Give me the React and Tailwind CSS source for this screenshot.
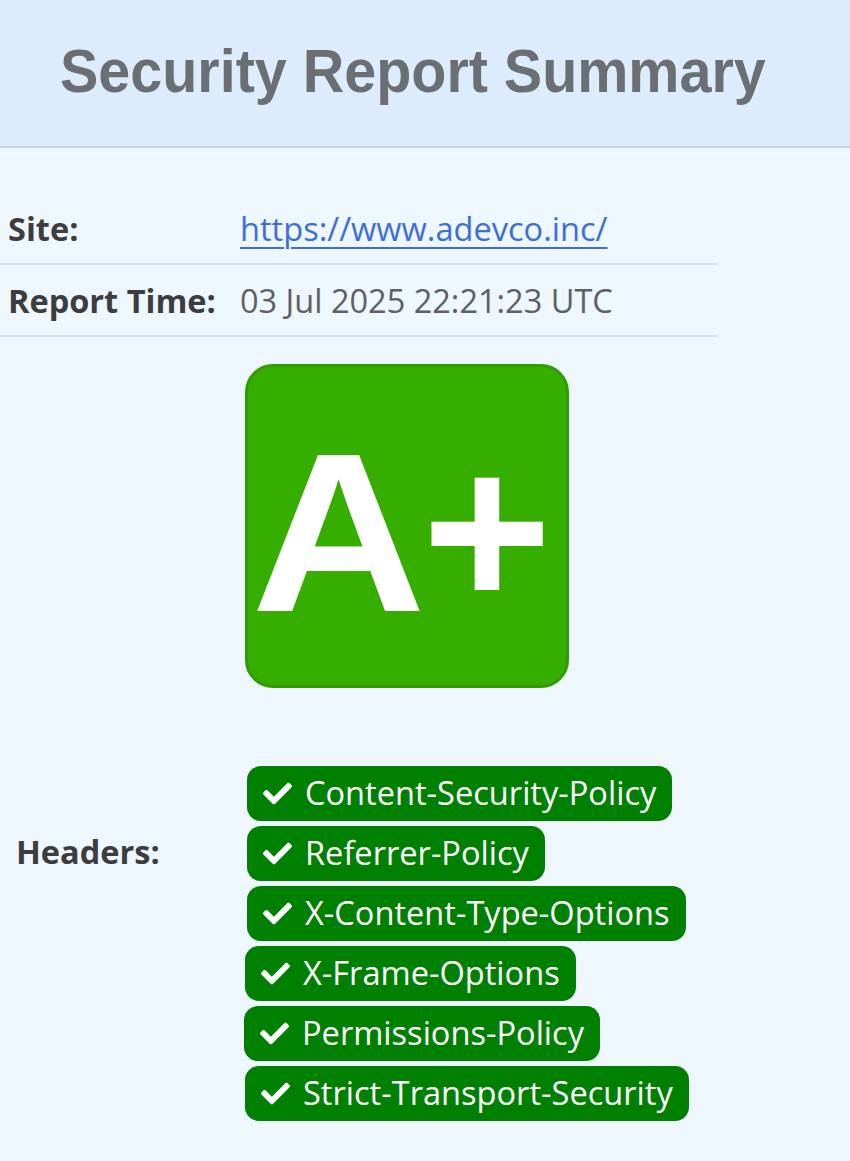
import React from "react";

const Check = () => (
  <svg viewBox="0 0 512 512" className="w-[29px] h-[29px] shrink-0" fill="white">
    <path d="M173.898 439.404l-166.4-166.4c-9.997-9.997-9.997-26.206 0-36.204l36.203-36.204c9.997-9.998 26.207-9.998 36.204 0L192 312.69 432.095 72.596c9.997-9.997 26.207-9.997 36.204 0l36.203 36.204c9.997 9.997 9.997 26.206 0 36.204l-294.4 294.401c-9.998 9.997-26.207 9.997-36.204-.001z" />
  </svg>
);

const headers = [
  { name: "Content-Security-Policy", ml: "ml-[7px]" },
  { name: "Referrer-Policy", ml: "ml-[7px]" },
  { name: "X-Content-Type-Options", ml: "ml-[7px]" },
  { name: "X-Frame-Options", ml: "ml-[5px]" },
  { name: "Permissions-Policy", ml: "ml-[4px]" },
  { name: "Strict-Transport-Security", ml: "ml-[5px]" },
];

export default function App() {
  return (
    <div className="min-h-[1161px] w-[850px] bg-[#eef6fe]" style={{ fontFamily: '"Open Sans", sans-serif' }}>
      <div className="h-[148px] bg-[#dcecfc] border-b-2 border-[#c9d5df] pl-[60px] pt-[36px]">
        <h1
          className="text-[#6b6e73] text-[61px] font-bold leading-[70px] origin-left scale-x-[0.942] whitespace-nowrap"
          style={{ fontFamily: '"Liberation Sans", Arial, sans-serif' }}
        >
          Security Report Summary
        </h1>
      </div>
      <div className="w-[718px] pt-[45px]">
        <div className="flex items-center h-[72px] border-b-2 border-[#dcdfe3] pt-[3px]">
          <div className="w-[240px] pl-2 text-[32.5px] font-bold text-[#3d3d3f]">Site:</div>
          <a href="#" className="text-[32.6px] text-[#3d6fd9] underline underline-offset-[6px] decoration-2">
            https://www.adevco.inc/
          </a>
        </div>
        <div className="flex items-center h-[72px] border-b-2 border-[#dcdfe3] pt-[3px]">
          <div className="w-[240px] pl-2 text-[32.5px] font-bold text-[#3d3d3f] whitespace-nowrap">Report Time:</div>
          <div className="text-[32.5px] text-[#5e6065]">03 Jul 2025 22:21:23 UTC</div>
        </div>
        <div className="flex pt-[27px]">
          <div className="w-[245px]" />
          <div className="w-[324px] h-[324px] rounded-[28px] bg-[#36ae00] border-[3px] border-[#2f9c00] flex items-center justify-center">
            <span
              className="text-white font-bold text-[226px] leading-none mt-[14px] -ml-[4px] whitespace-nowrap"
              style={{ fontFamily: '"Liberation Sans", Arial, sans-serif' }}
            >
              <span className="inline-block scale-x-[1.07]">A</span>
              <span className="inline-block scale-[0.98] -translate-y-[2px]">+</span>
            </span>
          </div>
        </div>
        <div className="flex pt-[78px]">
          <div className="w-[240px] pl-4 pt-[62px] text-[32.5px] font-bold text-[#3d3d3f]">Headers:</div>
          <div className="flex flex-col items-start gap-[5px]">
            {headers.map((h) => (
              <div
                key={h.name}
                className={`${h.ml} h-[55px] flex items-center gap-[13px] rounded-[14px] bg-[#008000] pl-[16px] pr-[16px] text-white text-[32.6px]`}
              >
                <Check />
                <span className="whitespace-nowrap leading-none">{h.name}</span>
              </div>
            ))}
          </div>
        </div>
      </div>
    </div>
  );
}
